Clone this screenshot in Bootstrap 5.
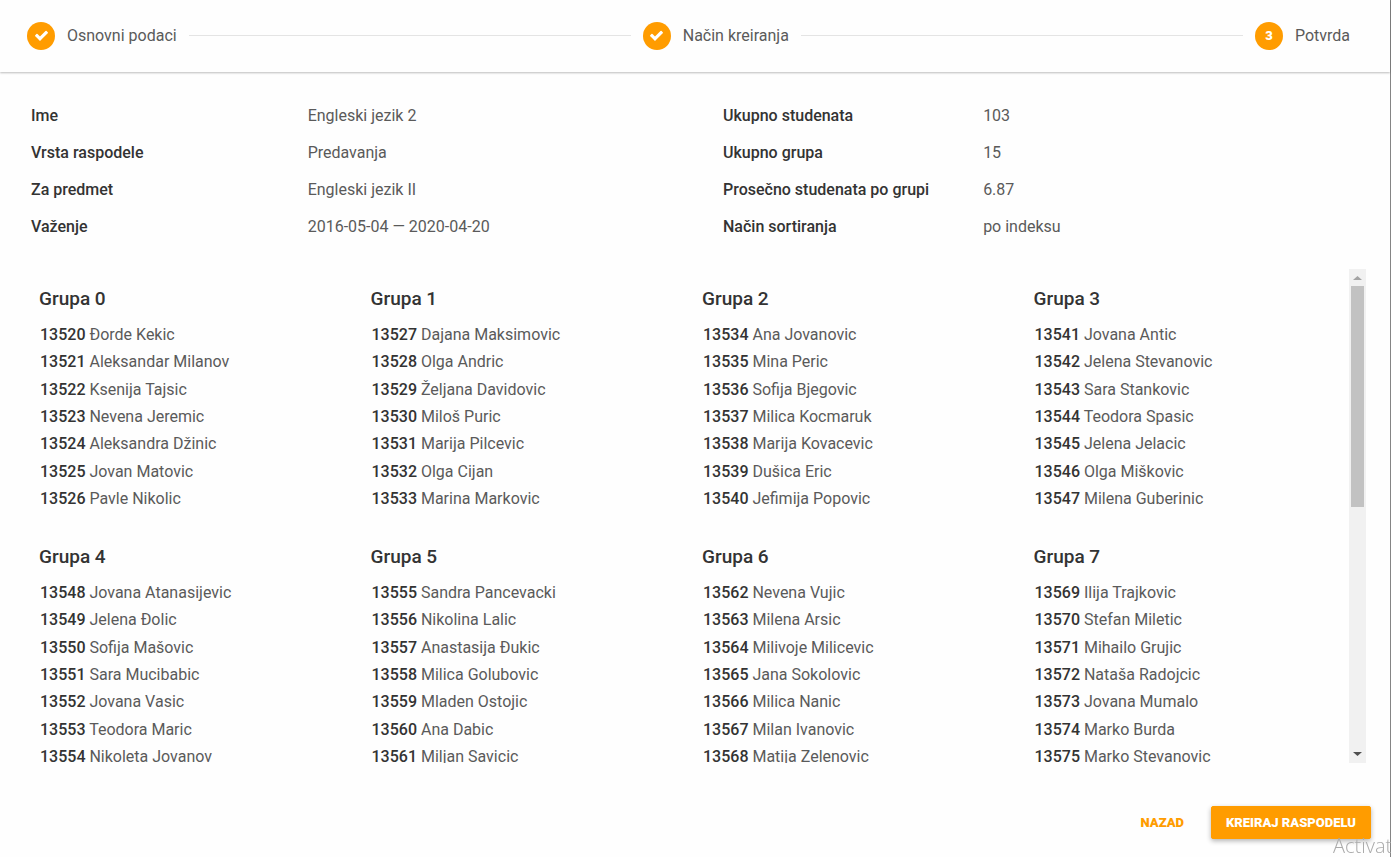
<!DOCTYPE html>
<html lang="sr-Latn">
<head>
<meta charset="utf-8">
<meta name="viewport" content="width=device-width, initial-scale=1">
<title>Kreiranje raspodele</title>
<link href="https://cdn.jsdelivr.net/npm/bootstrap@5.3.0/dist/css/bootstrap.min.css" rel="stylesheet">
<style>
  :root { --accent: #ff9c00; --ink: #333; --soft: #5a5a5a; }
  body { font-family: Roboto, "Liberation Sans", sans-serif; font-size: 16px; color: var(--soft); background: #fefefe; }
  .wizard { border-right: 1px solid #858585; }
  .steps { height: 72px; padding: 0 40px 1px 27px; gap: 12px; box-shadow: 0 1px 2px rgba(0,0,0,.26); }
  .step { gap: 12px; }
  .step-dot { width: 28px; height: 28px; background: var(--accent); font-size: 13px; font-weight: 900; }
  .step-line { height: 1px; background: #e4e4e4; }
  .summary { padding-top: 25px; }
  .facts { display: grid; grid-template-columns: 5fr 7fr; line-height: 37px; }
  .facts dt { font-weight: 500; color: var(--ink); }
  .facts-left { padding-left: 31px; }
  .facts-right { padding-left: 28px; grid-template-columns: 39fr 61fr; }
  .groups-wrap { margin: 24px 24px 0 23px; min-height: 0; }
  .groups { overflow-y: auto; scrollbar-width: none; }
  .groups::-webkit-scrollbar { display: none; }
  .group { padding: 16px 16px 15px; }
  .group h2 { font-size: 19px; font-weight: 500; line-height: 27px; color: var(--ink); margin-bottom: 9px; }
  .group ul { min-height: 191px; }
  .group li { line-height: 27px; padding-left: 1px; }
  .group b { font-weight: 500; color: var(--ink); }
  .scroll-track { width: 17px; background: #f1f1f1; }
  .scroll-track svg { width: 17px; height: 17px; }
  .scroll-thumb { width: 13px; background: #c2c2c2; }
  .actions { padding: 43px 19px 18px; gap: 12px; }
  .actions .btn { --bs-btn-font-size: 13px; --bs-btn-font-weight: 900; --bs-btn-line-height: 19px; --bs-btn-padding-y: 6px; --bs-btn-padding-x: 14px; --bs-btn-border-radius: 2px; }
  .btn-flat { --bs-btn-color: var(--accent); --bs-btn-hover-color: #e08900; }
  .btn-accent { --bs-btn-color: #fff; --bs-btn-bg: var(--accent); --bs-btn-border-color: var(--accent); --bs-btn-hover-color: #fff; --bs-btn-hover-bg: #e98f00; box-shadow: 0 2px 5px rgba(0,0,0,.3); }
  .watermark { right: 0; bottom: 0; width: 58px; font: 300 20px/22px "Open Sans", sans-serif; color: #aaa; }
</style>
</head>
<body>
<main class="wizard d-flex flex-column vh-100">
  <header class="steps d-flex align-items-center flex-shrink-0">
    <div class="step d-flex align-items-center">
      <span class="step-dot rounded-circle d-flex align-items-center justify-content-center"><svg width="15" height="15" viewBox="0 0 1792 1792" fill="#fff" aria-hidden="true"><path d="M1671 566q0 40-28 68l-724 724-136 136q-28 28-68 28t-68-28l-136-136-362-362q-28-28-28-68t28-68l136-136q28-28 68-28t68 28l294 295 656-657q28-28 68-28t68 28l136 136q28 28 28 68z"/></svg></span>
      <span>Osnovni podaci</span>
    </div>
    <div class="step-line flex-fill"></div>
    <div class="step d-flex align-items-center">
      <span class="step-dot rounded-circle d-flex align-items-center justify-content-center"><svg width="15" height="15" viewBox="0 0 1792 1792" fill="#fff" aria-hidden="true"><path d="M1671 566q0 40-28 68l-724 724-136 136q-28 28-68 28t-68-28l-136-136-362-362q-28-28-28-68t28-68l136-136q28-28 68-28t68 28l294 295 656-657q28-28 68-28t68 28l136 136q28 28 28 68z"/></svg></span>
      <span>Način kreiranja</span>
    </div>
    <div class="step-line flex-fill"></div>
    <div class="step d-flex align-items-center">
      <span class="step-dot rounded-circle d-flex align-items-center justify-content-center text-white">3</span>
      <span>Potvrda</span>
    </div>
  </header>

  <section class="summary row g-0 flex-shrink-0">
    <div class="col-6">
      <dl class="facts facts-left mb-0">
        <dt>Ime</dt><dd class="mb-0">Engleski jezik 2</dd>
        <dt>Vrsta raspodele</dt><dd class="mb-0">Predavanja</dd>
        <dt>Za predmet</dt><dd class="mb-0">Engleski jezik II</dd>
        <dt>Važenje</dt><dd class="mb-0">2016-05-04 — 2020-04-20</dd>
      </dl>
    </div>
    <div class="col-6">
      <dl class="facts facts-right mb-0">
        <dt>Ukupno studenata</dt><dd class="mb-0">103</dd>
        <dt>Ukupno grupa</dt><dd class="mb-0">15</dd>
        <dt>Prosečno studenata po grupi</dt><dd class="mb-0">6.87</dd>
        <dt>Način sortiranja</dt><dd class="mb-0">po indeksu</dd>
      </dl>
    </div>
  </section>

  <section class="groups-wrap d-flex flex-fill">
    <div class="groups flex-fill">
      <div class="row g-0">
        <div class="col-3 group"><h2>Grupa 0</h2><ul class="list-unstyled mb-0 d-flex flex-column justify-content-between">
          <li><b>13520</b> Đorde Kekic</li><li><b>13521</b> Aleksandar Milanov</li><li><b>13522</b> Ksenija Tajsic</li><li><b>13523</b> Nevena Jeremic</li><li><b>13524</b> Aleksandra Džinic</li><li><b>13525</b> Jovan Matovic</li><li><b>13526</b> Pavle Nikolic</li></ul></div>
        <div class="col-3 group"><h2>Grupa 1</h2><ul class="list-unstyled mb-0 d-flex flex-column justify-content-between">
          <li><b>13527</b> Dajana Maksimovic</li><li><b>13528</b> Olga Andric</li><li><b>13529</b> Željana Davidovic</li><li><b>13530</b> Miloš Puric</li><li><b>13531</b> Marija Pilcevic</li><li><b>13532</b> Olga Cijan</li><li><b>13533</b> Marina Markovic</li></ul></div>
        <div class="col-3 group"><h2>Grupa 2</h2><ul class="list-unstyled mb-0 d-flex flex-column justify-content-between">
          <li><b>13534</b> Ana Jovanovic</li><li><b>13535</b> Mina Peric</li><li><b>13536</b> Sofija Bjegovic</li><li><b>13537</b> Milica Kocmaruk</li><li><b>13538</b> Marija Kovacevic</li><li><b>13539</b> Dušica Eric</li><li><b>13540</b> Jefimija Popovic</li></ul></div>
        <div class="col-3 group"><h2>Grupa 3</h2><ul class="list-unstyled mb-0 d-flex flex-column justify-content-between">
          <li><b>13541</b> Jovana Antic</li><li><b>13542</b> Jelena Stevanovic</li><li><b>13543</b> Sara Stankovic</li><li><b>13544</b> Teodora Spasic</li><li><b>13545</b> Jelena Jelacic</li><li><b>13546</b> Olga Miškovic</li><li><b>13547</b> Milena Guberinic</li></ul></div>
        <div class="col-3 group"><h2>Grupa 4</h2><ul class="list-unstyled mb-0 d-flex flex-column justify-content-between">
          <li><b>13548</b> Jovana Atanasijevic</li><li><b>13549</b> Jelena Đolic</li><li><b>13550</b> Sofija Mašovic</li><li><b>13551</b> Sara Mucibabic</li><li><b>13552</b> Jovana Vasic</li><li><b>13553</b> Teodora Maric</li><li><b>13554</b> Nikoleta Jovanov</li></ul></div>
        <div class="col-3 group"><h2>Grupa 5</h2><ul class="list-unstyled mb-0 d-flex flex-column justify-content-between">
          <li><b>13555</b> Sandra Pancevacki</li><li><b>13556</b> Nikolina Lalic</li><li><b>13557</b> Anastasija Đukic</li><li><b>13558</b> Milica Golubovic</li><li><b>13559</b> Mladen Ostojic</li><li><b>13560</b> Ana Dabic</li><li><b>13561</b> Miljan Savicic</li></ul></div>
        <div class="col-3 group"><h2>Grupa 6</h2><ul class="list-unstyled mb-0 d-flex flex-column justify-content-between">
          <li><b>13562</b> Nevena Vujic</li><li><b>13563</b> Milena Arsic</li><li><b>13564</b> Milivoje Milicevic</li><li><b>13565</b> Jana Sokolovic</li><li><b>13566</b> Milica Nanic</li><li><b>13567</b> Milan Ivanovic</li><li><b>13568</b> Matija Zelenovic</li></ul></div>
        <div class="col-3 group"><h2>Grupa 7</h2><ul class="list-unstyled mb-0 d-flex flex-column justify-content-between">
          <li><b>13569</b> Ilija Trajkovic</li><li><b>13570</b> Stefan Miletic</li><li><b>13571</b> Mihailo Grujic</li><li><b>13572</b> Nataša Radojcic</li><li><b>13573</b> Jovana Mumalo</li><li><b>13574</b> Marko Burda</li><li><b>13575</b> Marko Stevanovic</li></ul></div>
      </div>
    </div>
    <div class="scroll-track d-flex flex-column align-items-center flex-shrink-0" aria-hidden="true">
      <svg class="flex-shrink-0" viewBox="0 0 17 17"><path d="M4 11h9L8.500 7z" fill="#a3a3a3"/></svg>
      <div class="flex-fill w-100 d-flex justify-content-center"><div class="scroll-thumb" style="height:48%"></div></div>
      <svg class="flex-shrink-0" viewBox="0 0 17 17"><path d="M4 6h9L8.500 10z" fill="#505050"/></svg>
    </div>
  </section>

  <footer class="actions d-flex justify-content-end flex-shrink-0">
    <button type="button" class="btn btn-flat">NAZAD</button>
    <button type="button" class="btn btn-accent">KREIRAJ RASPODELU</button>
  </footer>
</main>
<div class="watermark position-fixed overflow-hidden pe-none">Activat</div>
<script src="https://cdn.jsdelivr.net/npm/bootstrap@5.3.0/dist/js/bootstrap.bundle.min.js"></script>
</body>
</html>
